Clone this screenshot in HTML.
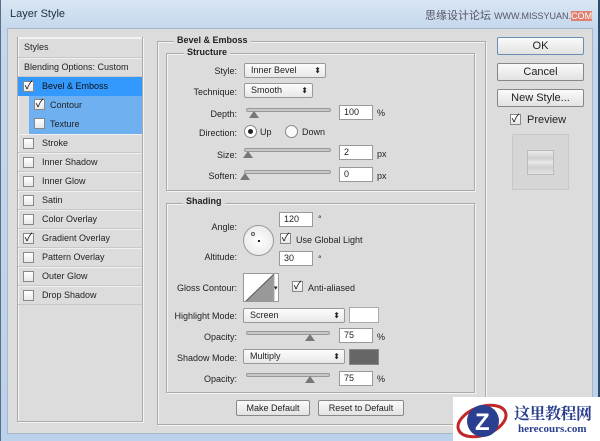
<!DOCTYPE html><html><head><meta charset="utf-8"><style>
*{box-sizing:border-box;margin:0;padding:0}
body{width:600px;height:441px;overflow:hidden;background:#bcd3ea;font-family:"Liberation Sans","Noto Sans CJK SC",sans-serif;font-size:9px;color:#222;position:relative}
.a{position:absolute}
.win{left:0;top:0;width:600px;height:441px;background:linear-gradient(#d9e6f3,#c4d7ec 30px,#bcd2ea);border-left:1px solid #56708c;border-right:2px solid #2c4a6a}
.dlg{left:7px;top:28px;width:586px;height:406px;background:#dcdcdc;border:1px solid #a9b7c6}
.t{white-space:nowrap}
.box{border:1px solid #aaa;box-shadow:1px 1px 0 #f4f4f4 inset,1px 1px 0 #f4f4f4}
.row{left:18px;width:124px;height:19px;border-top:1px solid #f0f0f0;border-bottom:1px solid #c8c8c8;padding-left:24px;line-height:17px}
.cb{width:11px;height:11px;border:1px solid #888;background:linear-gradient(#fff,#e8e8e8);font-size:11px;line-height:9px;text-align:center;color:#111}
.inp{background:#fff;border:1px solid #999;height:15px;padding-left:4px;line-height:13px}
.sel{border:1px solid #999;border-radius:2px;background:linear-gradient(#fcfcfc,#e8e8e8);height:15px;padding-left:6px;line-height:13px}
.sel:after{content:"⬍";position:absolute;right:4px;top:0;font-size:8px}
.sl{height:4px;border:1px solid #999;border-radius:2px;background:#c8c8c8}
.th{width:0;height:0;border-left:5px solid transparent;border-right:5px solid transparent;border-bottom:7px solid #777}
.btn{border:1px solid #888;border-radius:2px;background:linear-gradient(#fafafa,#e2e2e2);text-align:center}
.lb{text-align:right;width:100px}
</style></head><body>
<div class="a win"></div>
<div class="a t" style="left:10px;top:8px;font-size:11px;color:#1e2f44">Layer Style</div>
<div class="a t" style="left:425px;top:7px;font-size:11px;color:#556">思缘设计论坛 <span style="font-size:9px">WWW.MISSYUAN.<span style="background:#e08070;color:#fff">COM</span></span></div>
<div class="a dlg"></div>
<!-- left panel -->
<div class="a box" style="left:17px;top:37px;width:126px;height:385px"></div>
<div class="a row" style="top:37px;padding-left:6px;height:21px;line-height:19px">Styles</div>
<div class="a row" style="top:58px;padding-left:6px">Blending Options: Custom</div>
<div class="a row" style="top:77px;background:#3399ff;color:#111;border-color:#3399ff">Bevel &amp; Emboss</div>
<div class="a row" style="left:29px;width:113px;top:96px;background:#6fb1f0;border-color:#6fb1f0;padding-left:21px">Contour</div>
<div class="a row" style="left:29px;width:113px;top:115px;background:#6fb1f0;border-color:#6fb1f0;padding-left:21px">Texture</div>
<div class="a row" style="top:134px">Stroke</div>
<div class="a row" style="top:153px">Inner Shadow</div>
<div class="a row" style="top:172px">Inner Glow</div>
<div class="a row" style="top:191px">Satin</div>
<div class="a row" style="top:210px">Color Overlay</div>
<div class="a row" style="top:229px">Gradient Overlay</div>
<div class="a row" style="top:248px">Pattern Overlay</div>
<div class="a row" style="top:267px">Outer Glow</div>
<div class="a row" style="top:286px">Drop Shadow</div>
<div class="a cb" style="left:23px;top:81px">✓</div>
<div class="a cb" style="left:34px;top:99px">✓</div>
<div class="a cb" style="left:34px;top:118px"></div>
<div class="a cb" style="left:23px;top:138px"></div>
<div class="a cb" style="left:23px;top:157px"></div>
<div class="a cb" style="left:23px;top:176px"></div>
<div class="a cb" style="left:23px;top:195px"></div>
<div class="a cb" style="left:23px;top:214px"></div>
<div class="a cb" style="left:23px;top:233px">✓</div>
<div class="a cb" style="left:23px;top:252px"></div>
<div class="a cb" style="left:23px;top:271px"></div>
<div class="a cb" style="left:23px;top:290px"></div>
<!-- main -->
<div class="a box" style="left:157px;top:41px;width:329px;height:384px"></div>
<div class="a t" style="left:174px;top:35px;background:#dcdcdc;padding:0 3px;font-weight:bold">Bevel &amp; Emboss</div>
<div class="a box" style="left:166px;top:53px;width:309px;height:138px"></div>
<div class="a t" style="left:184px;top:47px;background:#dcdcdc;padding:0 3px;font-weight:bold">Structure</div>
<div class="a t lb" style="left:137px;top:66px">Style:</div>
<div class="a sel" style="left:244px;top:63px;width:82px">Inner Bevel</div>
<div class="a t lb" style="left:137px;top:87px">Technique:</div>
<div class="a sel" style="left:244px;top:83px;width:69px">Smooth</div>
<div class="a t lb" style="left:137px;top:109px">Depth:</div>
<div class="a sl" style="left:246px;top:108px;width:85px"></div><div class="a th" style="left:249px;top:111px"></div>
<div class="a inp" style="left:339px;top:105px;width:34px">100</div><div class="a t" style="left:377px;top:108px">%</div>
<div class="a t lb" style="left:137px;top:128px">Direction:</div>
<div class="a" style="left:244px;top:125px;width:13px;height:13px;border:1px solid #888;border-radius:50%;background:#fff"><div class="a" style="left:3px;top:3px;width:5px;height:5px;border-radius:50%;background:#222"></div></div>
<div class="a t" style="left:260px;top:127px">Up</div>
<div class="a" style="left:285px;top:125px;width:13px;height:13px;border:1px solid #888;border-radius:50%;background:#fafafa"></div>
<div class="a t" style="left:302px;top:127px">Down</div>
<div class="a t lb" style="left:137px;top:150px">Size:</div>
<div class="a sl" style="left:244px;top:148px;width:87px"></div><div class="a th" style="left:243px;top:151px"></div>
<div class="a inp" style="left:339px;top:145px;width:34px">2</div><div class="a t" style="left:377px;top:149px">px</div>
<div class="a t lb" style="left:137px;top:171px">Soften:</div>
<div class="a sl" style="left:244px;top:170px;width:87px"></div><div class="a th" style="left:240px;top:173px"></div>
<div class="a inp" style="left:339px;top:167px;width:34px">0</div><div class="a t" style="left:377px;top:171px">px</div>
<div class="a box" style="left:166px;top:203px;width:309px;height:190px"></div>
<div class="a t" style="left:183px;top:196px;background:#dcdcdc;padding:0 3px;font-weight:bold">Shading</div>
<div class="a t lb" style="left:137px;top:222px">Angle:</div>
<div class="a" style="left:243px;top:225px;width:31px;height:31px;border:1px solid #999;border-radius:50%;background:radial-gradient(#fff,#e4e4e4)"><div class="a" style="left:7px;top:6px;width:4px;height:4px;border:1px solid #555;border-radius:50%"></div><div class="a" style="left:14px;top:14px;width:2px;height:2px;background:#222"></div></div>
<div class="a inp" style="left:279px;top:212px;width:34px">120</div><div class="a t" style="left:318px;top:214px">°</div>
<div class="a cb" style="left:280px;top:233px">✓</div><div class="a t" style="left:296px;top:235px">Use Global Light</div>
<div class="a t lb" style="left:137px;top:252px">Altitude:</div>
<div class="a inp" style="left:279px;top:251px;width:34px">30</div><div class="a t" style="left:318px;top:254px">°</div>
<div class="a t lb" style="left:137px;top:283px">Gloss Contour:</div>
<div class="a" style="left:243px;top:273px;width:36px;height:29px;border:1px solid #999;background:#fff;overflow:hidden"><svg width="36" height="29"><polygon points="0,29 30,0 30,29" fill="#999"/><line x1="0" y1="29" x2="30" y2="0" stroke="#555"/><line x1="30" y1="0" x2="30" y2="29" stroke="#aaa"/></svg><div class="a" style="left:30px;top:10px;font-size:7px">▾</div></div>
<div class="a cb" style="left:292px;top:281px">✓</div><div class="a t" style="left:308px;top:283px">Anti-aliased</div>
<div class="a t lb" style="left:137px;top:311px">Highlight Mode:</div>
<div class="a sel" style="left:243px;top:308px;width:102px">Screen</div>
<div class="a" style="left:349px;top:307px;width:30px;height:16px;border:1px solid #aaa;background:#fff"></div>
<div class="a t lb" style="left:137px;top:332px">Opacity:</div>
<div class="a sl" style="left:246px;top:331px;width:84px"></div><div class="a th" style="left:305px;top:334px"></div>
<div class="a inp" style="left:339px;top:328px;width:34px">75</div><div class="a t" style="left:377px;top:332px">%</div>
<div class="a t lb" style="left:137px;top:353px">Shadow Mode:</div>
<div class="a sel" style="left:243px;top:349px;width:102px">Multiply</div>
<div class="a" style="left:349px;top:349px;width:30px;height:16px;border:1px solid #888;background:#666"></div>
<div class="a t lb" style="left:137px;top:374px">Opacity:</div>
<div class="a sl" style="left:246px;top:373px;width:84px"></div><div class="a th" style="left:305px;top:376px"></div>
<div class="a inp" style="left:339px;top:371px;width:34px">75</div><div class="a t" style="left:377px;top:374px">%</div>
<div class="a btn" style="left:236px;top:400px;width:74px;height:16px;line-height:14px">Make Default</div>
<div class="a btn" style="left:318px;top:400px;width:86px;height:16px;line-height:14px">Reset to Default</div>
<!-- right -->
<div class="a btn" style="left:497px;top:37px;width:87px;height:18px;line-height:16px;font-size:11px;border-color:#6a8fb5">OK</div>
<div class="a btn" style="left:497px;top:63px;width:87px;height:18px;line-height:16px;font-size:11px">Cancel</div>
<div class="a btn" style="left:497px;top:89px;width:87px;height:18px;line-height:16px;font-size:11px">New Style...</div>
<div class="a cb" style="left:510px;top:114px">✓</div><div class="a t" style="left:527px;top:114px;font-size:11px">Preview</div>
<div class="a" style="left:512px;top:134px;width:57px;height:56px;border:1px solid #c8c8c8;background:#d6d6d6"><div class="a" style="left:14px;top:15px;width:27px;height:25px;border:1px solid #bbb;background:linear-gradient(#ececec,#d0d0d0 30%,#e8e8e8 50%,#d0d0d0 70%,#e4e4e4)"></div></div>
<!-- logo -->
<div class="a" style="left:453px;top:397px;width:147px;height:44px;background:#fff"></div>
<svg class="a" style="left:454px;top:399px" width="60" height="42"><ellipse cx="28" cy="22" rx="25" ry="14" fill="none" stroke="#c0282a" stroke-width="3" transform="rotate(-20 28 22)"/><circle cx="29" cy="22" r="16" fill="#2a3f8f"/><text x="21" y="31" font-family="Liberation Sans" font-weight="bold" font-size="24" fill="#fff">Z</text></svg>
<div class="a t" style="left:514px;top:401px;font-size:16px;font-weight:bold;color:#2a3f8f;font-family:'Noto Serif CJK SC',serif;letter-spacing:-0.5px">这里教程网</div>
<div class="a t" style="left:518px;top:423px;font-size:11px;font-weight:bold;color:#2a3f8f;font-family:'Liberation Serif',serif">herecours.com</div>
</body></html>
